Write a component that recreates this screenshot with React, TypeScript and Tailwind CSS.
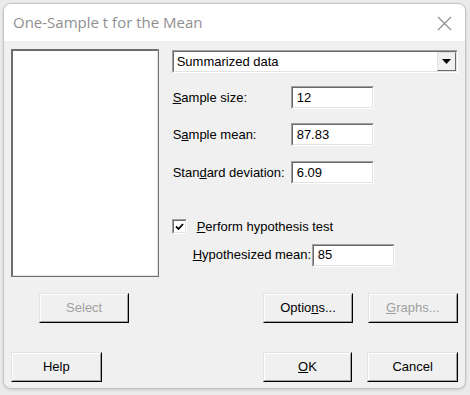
import React from 'react';

const ui = { fontFamily: '"Liberation Sans", Arial, sans-serif' };

function Sunken({ value, className = '' }: { value: string; className?: string }) {
  return (
    <div className={`h-[23px] border border-t-[#a0a0a0] border-l-[#a0a0a0] border-b-white border-r-white ${className}`}>
      <div className="h-full border border-t-[#696969] border-l-[#696969] border-b-[#e3e3e3] border-r-[#e3e3e3] bg-white pl-[4px] flex items-center text-[13px] text-black">
        {value}
      </div>
    </div>
  );
}

function Btn({ children, disabled, className = '' }: { children: React.ReactNode; disabled?: boolean; className?: string }) {
  return (
    <div className={`h-[30px] border border-t-[#e3e3e3] border-l-[#e3e3e3] border-b-black border-r-black ${className}`}>
      <div
        className={`h-full border border-t-white border-l-white border-b-[#a0a0a0] border-r-[#a0a0a0] bg-[#f0f0f0] flex items-center justify-center text-[13px] ${
          disabled ? 'text-[#a0a0a0]' : 'text-black'
        }`}
      >
        {children}
      </div>
    </div>
  );
}

export default function App() {
  return (
    <div className="w-[470px] h-[395px] bg-[#ebebeb] pt-[3px] pl-[3px]" style={ui}>
      <div className="w-[463px] h-[386px] rounded-[8px] border border-[#c4c4c4] overflow-hidden bg-[#f0f0f0] flex flex-col shadow-[0_1px_3px_rgba(0,0,0,0.15)]">
        {/* Title bar */}
        <div className="h-[37px] bg-white flex items-center justify-between pl-[9px] pr-[13px]">
          <span className="text-[15px] text-[#8f8f8f]" style={{ fontFamily: '"Open Sans", "Noto Sans", sans-serif' }}>
            One-Sample t for the Mean
          </span>
          <svg width="15" height="15" viewBox="0 0 15 15" className="mt-[1px]">
            <path d="M1 1 L14 14 M14 1 L1 14" stroke="#8a8a8a" strokeWidth="1.1" />
          </svg>
        </div>

        {/* Body */}
        <div className="flex-1 pt-[8px] px-[7px]">
          <div className="flex">
            {/* Variable list */}
            <div className="w-[148px] h-[228px] border border-[#707070]">
              <div className="h-full border border-t-[#696969] border-l-[#696969] border-b-[#e3e3e3] border-r-[#e3e3e3] bg-white" />
            </div>

            <div className="ml-[13px] w-[287px] pt-[1px] text-[13px] text-black">
              {/* Dropdown */}
              <div className="h-[23px] border border-t-[#a0a0a0] border-l-[#a0a0a0] border-b-white border-r-white">
                <div className="h-full border border-t-[#696969] border-l-[#696969] border-b-[#e3e3e3] border-r-[#e3e3e3] bg-white flex items-center">
                  <span className="flex-1 pl-[3px]">Summarized data</span>
                  <div className="w-[19px] h-full border border-t-[#e3e3e3] border-l-[#e3e3e3] border-b-[#696969] border-r-[#696969] bg-[#f0f0f0] flex items-center justify-center">
                    <svg width="9" height="5" viewBox="0 0 9 5">
                      <path d="M0 0 H9 L4.5 5 Z" fill="#000" />
                    </svg>
                  </div>
                </div>
              </div>

              <div className="mt-[13px] flex items-center">
                <span className="w-[119px] pl-[1px]">
                  <u>S</u>ample size:
                </span>
                <Sunken value="12" className="w-[83px]" />
              </div>
              <div className="mt-[14px] flex items-center">
                <span className="w-[119px] pl-[1px]">
                  S<u>a</u>mple mean:
                </span>
                <Sunken value="87.83" className="w-[83px]" />
              </div>
              <div className="mt-[15px] flex items-center">
                <span className="w-[119px] pl-[1px]">
                  Stan<u>d</u>ard deviation:
                </span>
                <Sunken value="6.09" className="w-[83px]" />
              </div>

              {/* Hypothesis test */}
              <div className="mt-[33px] flex items-center">
                <div className="w-[15px] h-[15px] border border-t-[#a0a0a0] border-l-[#a0a0a0] border-b-white border-r-white">
                  <div className="w-full h-full border border-t-[#696969] border-l-[#696969] border-b-[#e3e3e3] border-r-[#e3e3e3] bg-white flex items-center justify-center">
                    <svg width="9" height="8" viewBox="0 0 9 8">
                      <path d="M1 3.5 L3.5 6 L8 1" stroke="#000" strokeWidth="1.8" fill="none" />
                    </svg>
                  </div>
                </div>
                <span className="ml-[10px]">
                  <u>P</u>erform hypothesis test
                </span>
              </div>
              <div className="mt-[7px] flex items-center pl-[21px]">
                <span className="w-[119px]">
                  <u>H</u>ypothesized mean:
                </span>
                <Sunken value="85" className="w-[83px]" />
              </div>
            </div>
          </div>

          {/* Button rows */}
          <div className="mt-[16px] flex">
            <Btn disabled className="ml-[28px] w-[91px]">Select</Btn>
            <Btn className="ml-[134px] w-[90px]">
              Optio<u>n</u>s...
            </Btn>
            <Btn disabled className="ml-[15px] w-[91px]">
              <u>G</u>raphs...
            </Btn>
          </div>
          <div className="mt-[29px] flex">
            <Btn className="w-[91px]">Help</Btn>
            <Btn className="ml-[161px] w-[90px]">
              <u>O</u>K
            </Btn>
            <Btn className="ml-[15px] w-[91px]">Cancel</Btn>
          </div>
        </div>
      </div>
    </div>
  );
}
